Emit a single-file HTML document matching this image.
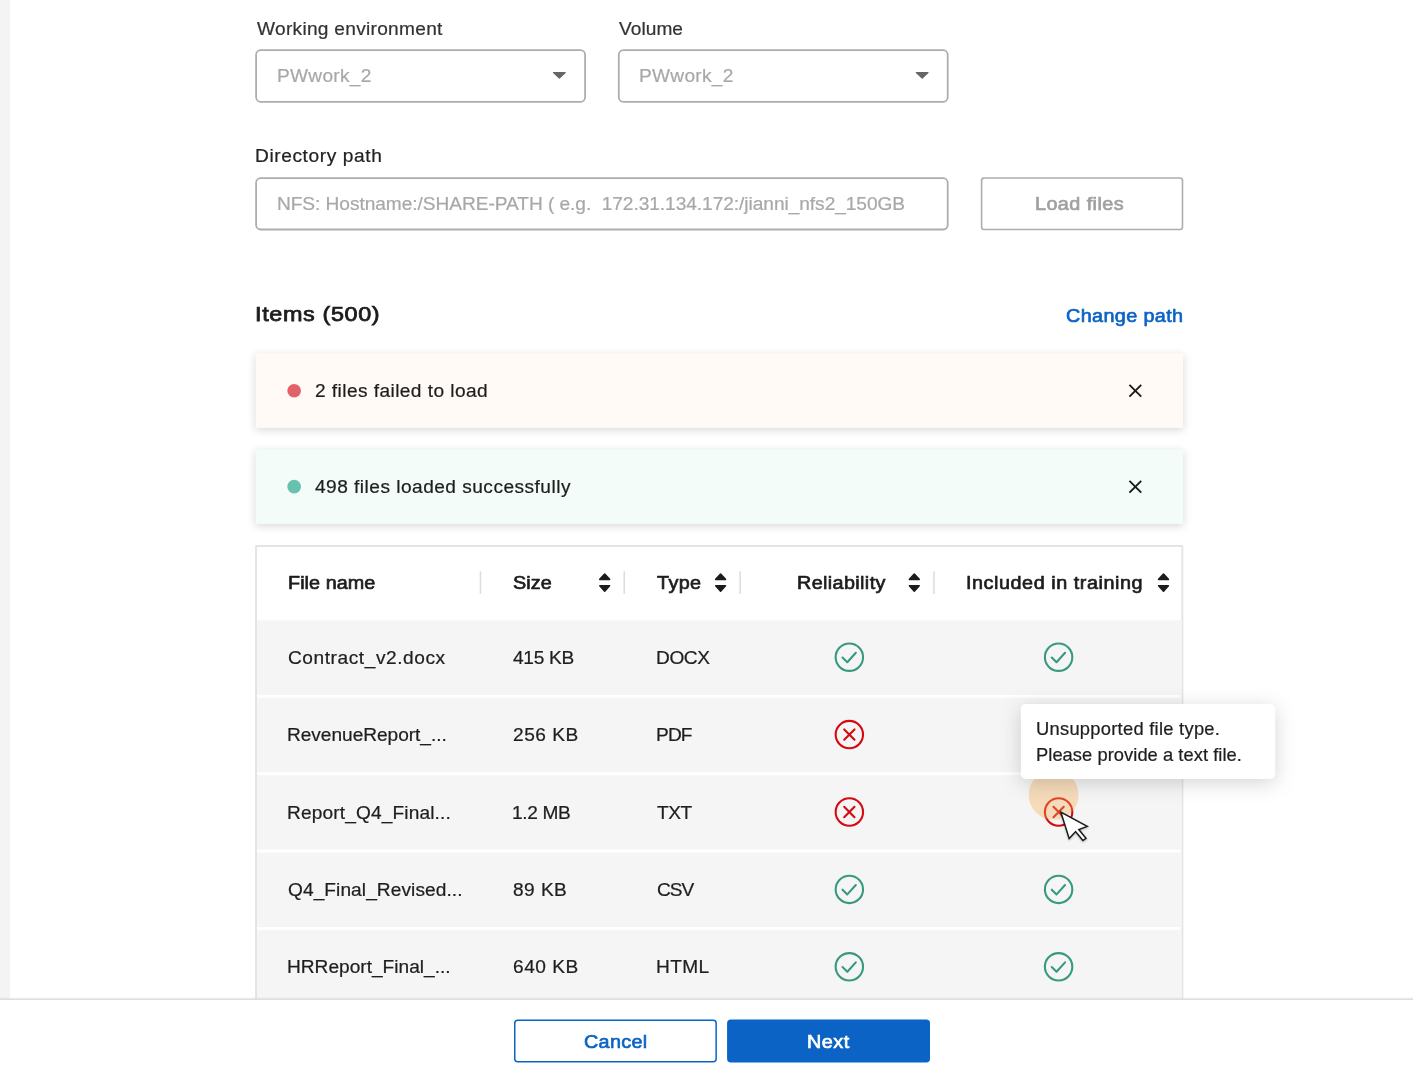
<!DOCTYPE html>
<html lang="en"><head><meta charset="utf-8"><title>Load files</title>
<style>
html,body{margin:0;padding:0;}
body{width:1413px;height:1084px;position:relative;overflow:hidden;background:#fff;font-family:"Liberation Sans",Arial,sans-serif;color:#242424;}
.a{position:absolute;white-space:nowrap;}
.t{will-change:transform;}
.ic{position:absolute;display:block;overflow:visible;}
</style></head><body>
<div class="a" style="left:0;top:0;width:10px;height:999px;background:#f4f4f4"></div>

<svg class="ic" style="left:0;top:0" width="1413" height="1084" viewBox="0 0 1413 1084"><rect x="255.7" y="353.4" width="927.4" height="74.4" fill="#fffaf6" style="filter:drop-shadow(0 2px 4px rgba(0,0,0,.16))"/><rect x="255.7" y="449.4" width="927.4" height="74.4" fill="#f3fcf9" style="filter:drop-shadow(0 2px 4px rgba(0,0,0,.16))"/></svg>
<svg class="ic" style="left:0;top:0" width="1413" height="1084" viewBox="0 0 1413 1084"><rect x="256.10" y="50.20" width="329.00" height="51.60" rx="4.5" fill="#fff" stroke="#adadad" stroke-width="1.8"/><rect x="618.80" y="50.20" width="328.90" height="51.60" rx="4.5" fill="#fff" stroke="#adadad" stroke-width="1.8"/><rect x="256.10" y="178.20" width="691.60" height="51.30" rx="4.5" fill="#fff" stroke="#adadad" stroke-width="1.8"/><rect x="981.60" y="178.00" width="200.90" height="51.50" rx="2.5" fill="#fff" stroke="#adadad" stroke-width="1.6"/><g transform="translate(559.40 75.30)"><path d="M-5.8 -2.7 L5.8 -2.7 L0 2.7 Z" fill="#666" stroke="#666" stroke-width="1.4" stroke-linejoin="round"/></g><g transform="translate(922.20 75.30)"><path d="M-5.8 -2.7 L5.8 -2.7 L0 2.7 Z" fill="#666" stroke="#666" stroke-width="1.4" stroke-linejoin="round"/></g><circle cx="294.15" cy="390.75" r="6.85" fill="#e2606a"/><circle cx="294.15" cy="486.7" r="6.85" fill="#66c2ad"/><g transform="translate(1135.35 390.70)"><path d="M-5.9 -5.9 L5.9 5.9 M5.9 -5.9 L-5.9 5.9" stroke="#1a1a1a" stroke-width="1.9" fill="none"/></g><g transform="translate(1135.35 486.70)"><path d="M-5.9 -5.9 L5.9 5.9 M5.9 -5.9 L-5.9 5.9" stroke="#1a1a1a" stroke-width="1.9" fill="none"/></g><rect x="256.05" y="546.05" width="926.30" height="463.00" rx="0.5" fill="#fff" stroke="#e4e4e4" stroke-width="1.9"/><rect x="257" y="620.30" width="924.6" height="74.60" fill="#f5f5f5"/><rect x="257" y="697.70" width="924.6" height="74.60" fill="#f5f5f5"/><rect x="257" y="775.10" width="924.6" height="74.60" fill="#f5f5f5"/><rect x="257" y="852.50" width="924.6" height="74.60" fill="#f5f5f5"/><rect x="257" y="929.90" width="924.6" height="74.60" fill="#f5f5f5"/><rect x="479.70" y="571.3" width="1.5" height="22.7" fill="#dcdcdc"/><rect x="623.50" y="571.3" width="1.5" height="22.7" fill="#dcdcdc"/><rect x="739.40" y="571.3" width="1.5" height="22.7" fill="#dcdcdc"/><rect x="933.20" y="571.3" width="1.5" height="22.7" fill="#dcdcdc"/><g transform="translate(604.70 582.60)"><path d="M-4.9 -3.2 L0 -8.5 L4.9 -3.2 Z M-4.9 3.2 L0 8.5 L4.9 3.2 Z" fill="#1c1c1c" stroke="#1c1c1c" stroke-width="1.6" stroke-linejoin="round"/></g><g transform="translate(720.60 582.60)"><path d="M-4.9 -3.2 L0 -8.5 L4.9 -3.2 Z M-4.9 3.2 L0 8.5 L4.9 3.2 Z" fill="#1c1c1c" stroke="#1c1c1c" stroke-width="1.6" stroke-linejoin="round"/></g><g transform="translate(914.30 582.60)"><path d="M-4.9 -3.2 L0 -8.5 L4.9 -3.2 Z M-4.9 3.2 L0 8.5 L4.9 3.2 Z" fill="#1c1c1c" stroke="#1c1c1c" stroke-width="1.6" stroke-linejoin="round"/></g><g transform="translate(1163.50 582.60)"><path d="M-4.9 -3.2 L0 -8.5 L4.9 -3.2 Z M-4.9 3.2 L0 8.5 L4.9 3.2 Z" fill="#1c1c1c" stroke="#1c1c1c" stroke-width="1.6" stroke-linejoin="round"/></g><g transform="translate(849.35 657.20)" fill="none" stroke="#37997f" stroke-width="2.1"><circle r="13.7"/><path d="M-6.85 0.3 L-2.05 5 L6.45 -4.4" stroke-linecap="round" stroke-linejoin="round"/></g><g transform="translate(1058.60 657.20)" fill="none" stroke="#37997f" stroke-width="2.1"><circle r="13.7"/><path d="M-6.85 0.3 L-2.05 5 L6.45 -4.4" stroke-linecap="round" stroke-linejoin="round"/></g><g transform="translate(849.35 734.60)" fill="none" stroke="#d40a10" stroke-width="2.1"><circle r="13.7"/><path d="M-5.15 -5.15 L5.15 5.15 M5.15 -5.15 L-5.15 5.15" stroke-linecap="round"/></g><g transform="translate(849.35 812.00)" fill="none" stroke="#d40a10" stroke-width="2.1"><circle r="13.7"/><path d="M-5.15 -5.15 L5.15 5.15 M5.15 -5.15 L-5.15 5.15" stroke-linecap="round"/></g><g transform="translate(1058.60 812.00)" fill="none" stroke="#d40a10" stroke-width="2.1"><circle r="13.7"/><path d="M-5.15 -5.15 L5.15 5.15 M5.15 -5.15 L-5.15 5.15" stroke-linecap="round"/></g><circle cx="1053.6" cy="794.9" r="24.9" fill="rgba(248,174,82,.36)"/><g transform="translate(849.35 889.40)" fill="none" stroke="#37997f" stroke-width="2.1"><circle r="13.7"/><path d="M-6.85 0.3 L-2.05 5 L6.45 -4.4" stroke-linecap="round" stroke-linejoin="round"/></g><g transform="translate(1058.60 889.40)" fill="none" stroke="#37997f" stroke-width="2.1"><circle r="13.7"/><path d="M-6.85 0.3 L-2.05 5 L6.45 -4.4" stroke-linecap="round" stroke-linejoin="round"/></g><g transform="translate(849.35 966.80)" fill="none" stroke="#37997f" stroke-width="2.1"><circle r="13.7"/><path d="M-6.85 0.3 L-2.05 5 L6.45 -4.4" stroke-linecap="round" stroke-linejoin="round"/></g><g transform="translate(1058.60 966.80)" fill="none" stroke="#37997f" stroke-width="2.1"><circle r="13.7"/><path d="M-6.85 0.3 L-2.05 5 L6.45 -4.4" stroke-linecap="round" stroke-linejoin="round"/></g></svg>
<div class="a t" style="left:256.60px;top:17.26px;font-size:18.3px;line-height:24px;color:#333;letter-spacing:0.278px;transform:scaleX(1.045);transform-origin:0 0;-webkit-text-stroke:0.22px #333;">Working environment</div>
<div class="a t" style="left:618.58px;top:17.26px;font-size:18.3px;line-height:24px;color:#333;letter-spacing:0.052px;transform:scaleX(1.045);transform-origin:0 0;-webkit-text-stroke:0.22px #333;">Volume</div>
<div class="a t" style="left:276.56px;top:64.46px;font-size:18.3px;line-height:24px;color:#a8a8a8;letter-spacing:0.277px;transform:scaleX(1.045);transform-origin:0 0;-webkit-text-stroke:0.22px #a8a8a8;">PWwork_2</div>
<div class="a t" style="left:639.41px;top:64.46px;font-size:18.3px;line-height:24px;color:#a8a8a8;letter-spacing:0.277px;transform:scaleX(1.045);transform-origin:0 0;-webkit-text-stroke:0.22px #a8a8a8;">PWwork_2</div>
<div class="a t" style="left:255.22px;top:144.06px;font-size:18.3px;line-height:24px;color:#222;letter-spacing:0.582px;transform:scaleX(1.045);transform-origin:0 0;-webkit-text-stroke:0.22px #222;">Directory path</div>
<div class="a t" style="left:276.96px;top:192.06px;font-size:18.3px;line-height:24px;color:#a8a8a8;letter-spacing:-0.044px;transform:scaleX(1.045);transform-origin:0 0;-webkit-text-stroke:0.22px #a8a8a8;white-space:pre;">NFS: Hostname:/SHARE-PATH ( e.g.  172.31.134.172:/jianni_nfs2_150GB</div>
<div class="a t" style="left:1035.23px;top:192.26px;font-size:18px;line-height:24px;color:#a0a0a0;letter-spacing:0.381px;transform:scaleX(1.1);transform-origin:0 0;-webkit-text-stroke:0.65px #a0a0a0;">Load files</div>
<div class="a t" style="left:254.92px;top:301.87px;font-size:20px;line-height:24px;color:#1c1c1c;letter-spacing:0.539px;transform:scaleX(1.17);transform-origin:0 0;-webkit-text-stroke:0.75px #1c1c1c;">Items (500)</div>
<div class="a t" style="left:1065.62px;top:304.36px;font-size:18px;line-height:24px;color:#0b64c5;letter-spacing:0.336px;transform:scaleX(1.1);transform-origin:0 0;-webkit-text-stroke:0.65px #0b64c5;">Change path</div>
<div class="a t" style="left:314.51px;top:379.16px;font-size:18.3px;line-height:24px;color:#1e1e1e;letter-spacing:0.413px;transform:scaleX(1.045);transform-origin:0 0;-webkit-text-stroke:0.22px #1e1e1e;">2 files failed to load</div>
<div class="a t" style="left:315.12px;top:475.36px;font-size:18.3px;line-height:24px;color:#1e1e1e;letter-spacing:0.455px;transform:scaleX(1.045);transform-origin:0 0;-webkit-text-stroke:0.22px #1e1e1e;">498 files loaded successfully</div>
<div class="a t" style="left:287.60px;top:570.86px;font-size:18px;line-height:24px;color:#1c1c1c;letter-spacing:0.049px;transform:scaleX(1.1);transform-origin:0 0;-webkit-text-stroke:0.65px #1c1c1c;">File name</div>
<div class="a t" style="left:513.00px;top:570.86px;font-size:18px;line-height:24px;color:#1c1c1c;letter-spacing:0.038px;transform:scaleX(1.1);transform-origin:0 0;-webkit-text-stroke:0.65px #1c1c1c;">Size</div>
<div class="a t" style="left:657.33px;top:570.86px;font-size:18px;line-height:24px;color:#1c1c1c;letter-spacing:0.342px;transform:scaleX(1.1);transform-origin:0 0;-webkit-text-stroke:0.65px #1c1c1c;">Type</div>
<div class="a t" style="left:797.10px;top:570.86px;font-size:18px;line-height:24px;color:#1c1c1c;letter-spacing:0.334px;transform:scaleX(1.1);transform-origin:0 0;-webkit-text-stroke:0.65px #1c1c1c;">Reliability</div>
<div class="a t" style="left:965.96px;top:570.86px;font-size:18px;line-height:24px;color:#1c1c1c;letter-spacing:0.496px;transform:scaleX(1.1);transform-origin:0 0;-webkit-text-stroke:0.65px #1c1c1c;">Included in training</div>
<div class="a t" style="left:287.81px;top:645.76px;font-size:18.3px;line-height:24px;color:#1e1e1e;letter-spacing:0.541px;transform:scaleX(1.045);transform-origin:0 0;-webkit-text-stroke:0.22px #1e1e1e;">Contract_v2.docx</div>
<div class="a t" style="left:513.08px;top:645.76px;font-size:18.3px;line-height:24px;color:#1e1e1e;letter-spacing:-0.269px;transform:scaleX(1.045);transform-origin:0 0;-webkit-text-stroke:0.22px #1e1e1e;">415 KB</div>
<div class="a t" style="left:656.36px;top:645.76px;font-size:18.3px;line-height:24px;color:#1e1e1e;letter-spacing:-0.380px;transform:scaleX(1.045);transform-origin:0 0;-webkit-text-stroke:0.22px #1e1e1e;">DOCX</div>
<div class="a t" style="left:287.36px;top:723.16px;font-size:18.3px;line-height:24px;color:#1e1e1e;letter-spacing:-0.034px;transform:scaleX(1.045);transform-origin:0 0;-webkit-text-stroke:0.22px #1e1e1e;">RevenueReport_...</div>
<div class="a t" style="left:512.74px;top:723.16px;font-size:18.3px;line-height:24px;color:#1e1e1e;letter-spacing:0.486px;transform:scaleX(1.045);transform-origin:0 0;-webkit-text-stroke:0.22px #1e1e1e;">256 KB</div>
<div class="a t" style="left:656.36px;top:723.16px;font-size:18.3px;line-height:24px;color:#1e1e1e;letter-spacing:-0.826px;transform:scaleX(1.045);transform-origin:0 0;-webkit-text-stroke:0.22px #1e1e1e;">PDF</div>
<div class="a t" style="left:287.36px;top:800.56px;font-size:18.3px;line-height:24px;color:#1e1e1e;letter-spacing:0.132px;transform:scaleX(1.045);transform-origin:0 0;-webkit-text-stroke:0.22px #1e1e1e;">Report_Q4_Final...</div>
<div class="a t" style="left:511.99px;top:800.56px;font-size:18.3px;line-height:24px;color:#1e1e1e;letter-spacing:-0.329px;transform:scaleX(1.045);transform-origin:0 0;-webkit-text-stroke:0.22px #1e1e1e;">1.2 MB</div>
<div class="a t" style="left:657.20px;top:800.56px;font-size:18.3px;line-height:24px;color:#1e1e1e;letter-spacing:-0.477px;transform:scaleX(1.045);transform-origin:0 0;-webkit-text-stroke:0.22px #1e1e1e;">TXT</div>
<div class="a t" style="left:287.89px;top:877.96px;font-size:18.3px;line-height:24px;color:#1e1e1e;letter-spacing:0.075px;transform:scaleX(1.045);transform-origin:0 0;-webkit-text-stroke:0.22px #1e1e1e;">Q4_Final_Revised...</div>
<div class="a t" style="left:512.80px;top:877.96px;font-size:18.3px;line-height:24px;color:#1e1e1e;letter-spacing:0.428px;transform:scaleX(1.045);transform-origin:0 0;-webkit-text-stroke:0.22px #1e1e1e;">89 KB</div>
<div class="a t" style="left:656.72px;top:877.96px;font-size:18.3px;line-height:24px;color:#1e1e1e;letter-spacing:-1.026px;transform:scaleX(1.045);transform-origin:0 0;-webkit-text-stroke:0.22px #1e1e1e;">CSV</div>
<div class="a t" style="left:287.36px;top:955.36px;font-size:18.3px;line-height:24px;color:#1e1e1e;letter-spacing:0.005px;transform:scaleX(1.045);transform-origin:0 0;-webkit-text-stroke:0.22px #1e1e1e;">HRReport_Final_...</div>
<div class="a t" style="left:512.72px;top:955.36px;font-size:18.3px;line-height:24px;color:#1e1e1e;letter-spacing:0.509px;transform:scaleX(1.045);transform-origin:0 0;-webkit-text-stroke:0.22px #1e1e1e;">640 KB</div>
<div class="a t" style="left:656.36px;top:955.36px;font-size:18.3px;line-height:24px;color:#1e1e1e;letter-spacing:0.361px;transform:scaleX(1.045);transform-origin:0 0;-webkit-text-stroke:0.22px #1e1e1e;">HTML</div>
<svg class="ic" style="left:0;top:0" width="1413" height="1084" viewBox="0 0 1413 1084"><rect x="1020.9" y="703.9" width="254.3" height="75" rx="5" fill="#fff" style="filter:drop-shadow(0 4px 10px rgba(0,0,0,.17))"/></svg>
<div class="a t" style="left:1036.29px;top:716.83px;font-size:17.8px;line-height:24px;color:#1e1e1e;letter-spacing:0.266px;transform:scaleX(1.03);transform-origin:0 0;-webkit-text-stroke:0.22px #1e1e1e;">Unsupported file type.</div>
<div class="a t" style="left:1035.66px;top:743.03px;font-size:17.8px;line-height:24px;color:#1e1e1e;letter-spacing:0.048px;transform:scaleX(1.03);transform-origin:0 0;-webkit-text-stroke:0.22px #1e1e1e;">Please provide a text file.</div>
<div class="a" style="left:0;top:999px;width:1413px;height:85px;background:#fff"></div>
<svg class="ic" style="left:0;top:0" width="1413" height="1084" viewBox="0 0 1413 1084"><rect x="0" y="998.5" width="1413" height="1.5" fill="#dedede"/><rect x="0" y="997.5" width="1413" height="1" fill="rgba(0,0,0,.03)"/></svg>
<svg class="ic" style="left:0;top:0" width="1413" height="1084" viewBox="0 0 1413 1084"><path d="M1060.9 812.2 L1087.2 826.4 L1078.8 829.5 L1086 838.3 L1082.9 840.5 L1075.6 831.6 L1069.2 838.6 Z" fill="#fff" stroke="#1a1a1a" stroke-width="1.5" stroke-linejoin="miter" style="filter:drop-shadow(0 1px 1px rgba(0,0,0,.25))"/><rect x="514.75" y="1020.35" width="201.40" height="41.50" rx="3" fill="#fff" stroke="#0b64c5" stroke-width="1.5"/><rect x="727.85" y="1020.35" width="201.40" height="41.50" rx="3" fill="#0b64c5" stroke="#0b64c5" stroke-width="1.5"/></svg>
<div class="a t" style="left:583.57px;top:1029.76px;font-size:18px;line-height:24px;color:#0b64c5;letter-spacing:0.288px;transform:scaleX(1.1);transform-origin:0 0;-webkit-text-stroke:0.65px #0b64c5;">Cancel</div>
<div class="a t" style="left:806.91px;top:1029.76px;font-size:18px;line-height:24px;color:#fff;letter-spacing:0.480px;transform:scaleX(1.1);transform-origin:0 0;-webkit-text-stroke:0.65px #fff;">Next</div>
</body></html>
